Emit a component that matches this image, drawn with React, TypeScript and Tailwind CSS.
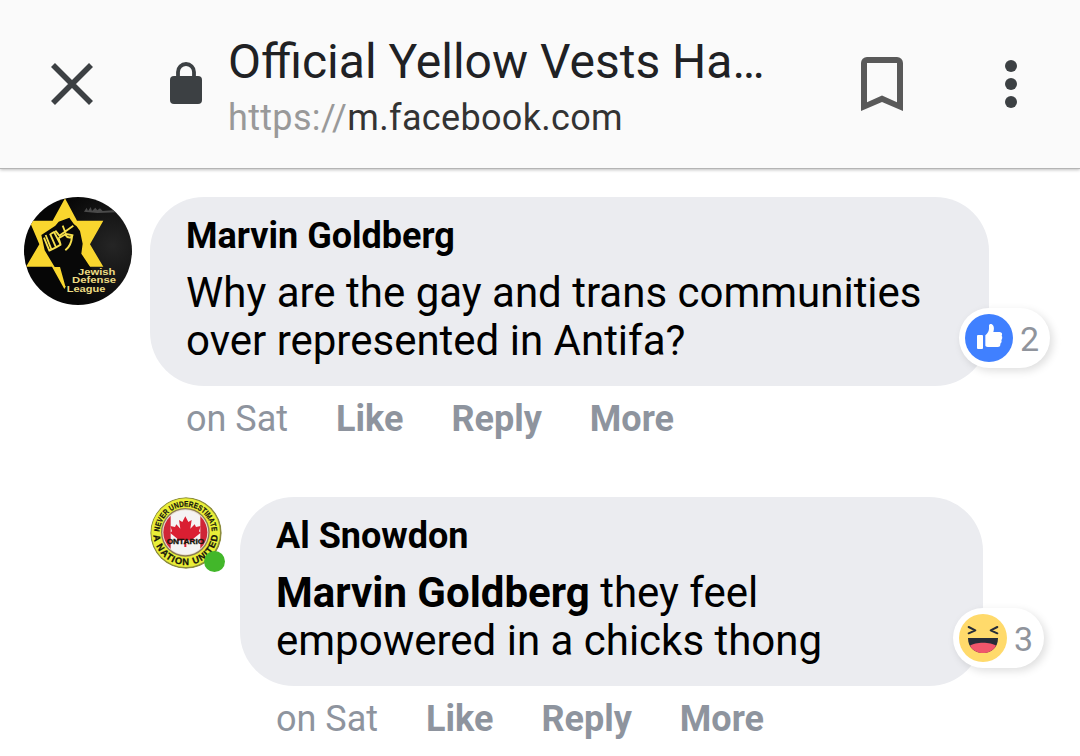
import React from 'react'
import { clsx } from 'clsx'

const CloseIcon = () => (
  <svg viewBox="0 0 42 42" className="w-[42px] h-[42px] shrink-0">
    <path d="M2 2L40 40M40 2L2 40" stroke="#3c4043" strokeWidth="5.6" fill="none" />
  </svg>
)

const LockIcon = () => (
  <svg viewBox="0 0 32 42" className="w-8 h-[42px] shrink-0">
    <path d="M8 16V10a8 8 0 0 1 16 0v6" stroke="#3c4043" strokeWidth="3.8" fill="none" />
    <rect x="0" y="14" width="32" height="28" rx="4" fill="#3c4043" />
  </svg>
)

const BookmarkIcon = () => (
  <svg viewBox="0 0 42 54" className="w-[42px] h-[54px] shrink-0">
    <path
      fillRule="evenodd"
      fill="#595959"
      d="M6 0H36A6 6 0 0 1 42 6V54L21 45L0 54V6A6 6 0 0 1 6 0ZM6 6V45.2L21 38.6L36 45.2V6Z"
    />
  </svg>
)

const MoreIcon = () => (
  <svg viewBox="0 0 12 48" className="w-3 h-12 shrink-0" fill="#3c4043">
    <circle cx="6" cy="6" r="6" />
    <circle cx="6" cy="24" r="6" />
    <circle cx="6" cy="42" r="6" />
  </svg>
)

const LeagueAvatar = () => (
  <svg viewBox="42 36 324 324" className="w-[108px] h-[108px] rounded-full">
    <defs>
      <radialGradient id="night" cx="0.82" cy="0.45" r="0.6">
        <stop offset="0" stopColor="#252525" />
        <stop offset="1" stopColor="#060606" />
      </radialGradient>
    </defs>
    <rect x="42" y="36" width="324" height="324" fill="url(#night)" />
    <path
      d="M222 80l8-12 4 10 8-12 4 12 10-10 6 8 8-6 8 8 30-2 14 6-60 2z"
      fill="#4a4a4a"
    />
    <path d="M165 40L201 107H280L240 178L280 245H202L163 312L126 245H48L88 178L58 107H128Z" fill="#f9d62e" />
    {/* raised arm */}
    <path
      d="M94 150L136 122L146 110L178 98L192 118L200 124L210 138L218 176L214 206L262 278L262 300L166 304L150 246L134 246L104 196Z"
      fill="#080808"
    />
    {/* gaps between the fingers and the thumb */}
    <path
      d="M107 150L125 195M102 158L118 197L138 187L120 146M138 187L152 179L132 141L122 147M152 179L146 160L168 147L190 151M168 147L158 122M136 137L148 152L190 122"
      fill="none"
      stroke="#f7e04c"
      strokeWidth="5.5"
      strokeLinejoin="round"
    />
    <path
      d="M166 149Q174 162 186 155Q184 182 166 196"
      fill="none"
      stroke="#f7e04c"
      strokeWidth="6"
    />
    <g
      fill="#eddc83"
      fontFamily="Liberation Sans, sans-serif"
      fontSize="27"
      fontWeight="bold"
    >
      <text x="204" y="270" textLength="112" lengthAdjust="spacingAndGlyphs">Jewish</text>
      <text x="186" y="295" textLength="132" lengthAdjust="spacingAndGlyphs">Defense</text>
      <text x="170" y="320" textLength="116" lengthAdjust="spacingAndGlyphs">League</text>
    </g>
  </svg>
)

const OntarioAvatar = () => (
  <svg viewBox="30 24 216 216" className="w-[72px] h-[72px] rounded-full">
    <defs>
      <path id="ring-top" d="M59 131A78 78 0 0 1 215 131" />
      <path id="ring-bottom" d="M40 131A97 97 0 0 0 234 131" />
      <clipPath id="flag">
        <circle cx="136" cy="130" r="66" />
      </clipPath>
    </defs>
    <circle cx="138" cy="132" r="107" fill="#8b8b3c" />
    <circle cx="137" cy="131" r="103" fill="#e9ee38" />
    <circle cx="136" cy="130" r="73" fill="#8b7a55" />
    <circle cx="136" cy="130" r="69" fill="#e9dfd2" />
    <g clipPath="url(#flag)">
      <rect x="66" y="60" width="142" height="142" fill="#f5f3f3" />
      <rect x="66" y="60" width="26" height="142" fill="#cf2637" />
      <rect x="181" y="60" width="30" height="142" fill="#cf2637" />
    </g>
    <path
      d="M136 82L145 99L155 93L151 119L164 106L168 114L182 111L177 127L182 131L160 149L162 156L139 153V174H133V153L110 156L112 149L90 131L96 127L91 111L105 114L109 106L121 119L117 93L127 99Z"
      fill="#da1f32"
    />
    <g fill="#15150b" stroke="#15150b" fontFamily="Liberation Sans, sans-serif" fontWeight="bold">
      <text x="80" y="166" fontSize="22" textLength="113" lengthAdjust="spacingAndGlyphs">
        ONTARIO
      </text>
      <text fontSize="24" strokeWidth="0.6">
        <textPath href="#ring-top" startOffset="3" textLength="238" lengthAdjust="spacingAndGlyphs">
          NEVER UNDERESTIMATE
        </textPath>
      </text>
      <text fontSize="28" strokeWidth="0.8">
        <textPath href="#ring-bottom" startOffset="8" textLength="288" lengthAdjust="spacing">
          A NATION UNITED
        </textPath>
      </text>
    </g>
  </svg>
)

const LikeReaction = () => (
  <svg viewBox="0 0 144 144" className="w-12 h-12 shrink-0">
    <circle cx="72" cy="72" r="72" fill="#4080ff" />
    <g fill="#fff">
      <rect x="36" y="63" width="18" height="42" rx="3" />
      <path d="M61 64C67 59 71 53 72 45V35C72 29 80 28 84 34C88 40 87 48 85 54H104C111 54 113 61 110 65C113 69 112 75 109 78C111 83 109 87 106 89C107 95 104 99 98 99H72C67 99 63 98 61 95Z" />
    </g>
  </svg>
)

const HahaReaction = () => (
  <svg viewBox="0 0 144 144" className="w-12 h-12 shrink-0">
    <circle cx="72" cy="72" r="72" fill="#ffda6b" />
    <path
      d="M29 39L49 49L29 58M115 39L95 49L115 58"
      fill="none"
      stroke="#262c38"
      strokeWidth="6"
      strokeLinecap="round"
      strokeLinejoin="round"
    />
    <path d="M27 72H117C117 101 97 117 72 117S27 101 27 72Z" fill="#262c38" />
    <path d="M33 95C48 83 96 83 111 95C103 110 88 117 72 117S41 110 33 95Z" fill="#f0566b" />
  </svg>
)

interface CommentProps {
  avatar: React.ReactNode
  name: string
  reaction: React.ReactNode
  count: number
  bubbleClass: string
  online?: boolean
  children: React.ReactNode
}

const Comment: React.FC<CommentProps> = ({
  avatar,
  name,
  reaction,
  count,
  bubbleClass,
  online,
  children,
}) => (
  <article className="flex items-start gap-[18px]">
    <div className="relative shrink-0">
      {avatar}
      {online && (
        <span className="absolute -right-[3px] -bottom-[3px] w-[21px] h-[21px] rounded-full bg-[#42b72a]" />
      )}
    </div>
    <div>
      <div
        className={clsx(
          'relative h-[189px] rounded-[54px] bg-[#ebecf0] pl-9 pt-[18px] text-black',
          bubbleClass
        )}
      >
        <h2 className="text-[36px] leading-[42px] font-bold">{name}</h2>
        <p className="mt-3 text-[42px] leading-[48px] whitespace-nowrap">{children}</p>
        <div className="absolute -right-[61px] bottom-[18px] flex h-[60px] w-[91px] items-center gap-[7px] rounded-full bg-white pl-[6px] text-[34px] text-[#90949c] shadow-[3px_3px_8px_rgba(0,0,0,0.13)]">
          {reaction}
          <span className="pt-[2px]">{count}</span>
        </div>
      </div>
      <div className="mt-3 flex gap-12 pl-9 text-[36px] leading-[42px] font-bold text-[#8e949e]">
        <span className="font-normal">on Sat</span>
        <button>Like</button>
        <button>Reply</button>
        <button>More</button>
      </div>
    </div>
  </article>
)

export default function App() {
  return (
    <div className="w-[1080px] h-[756px] overflow-hidden bg-white font-['Roboto',sans-serif]">
      <header className="flex h-[168px] items-center bg-[#fafafa] pl-[51px] shadow-[0_1px_0_#b4b4b4,0_2px_3px_rgba(0,0,0,0.25)]">
        <CloseIcon />
        <div className="ml-[77px] pb-[2px]">
          <LockIcon />
        </div>
        <div className="ml-[26px] w-[633px] pt-[5px] whitespace-nowrap">
          <h1 className="text-[48px] leading-[56px] text-[#202124]">Official Yellow Vests Ha…</h1>
          <div className="mt-[7px] text-[36px] leading-[42px] tracking-[0.33px] text-[#333]">
            <span className="text-[#999]">https://</span>m.facebook.com
          </div>
        </div>
        <BookmarkIcon />
        <div className="ml-[102px]">
          <MoreIcon />
        </div>
      </header>

      <main className="flex flex-col gap-[57px] pt-[29px] pl-6">
        <Comment
          avatar={<LeagueAvatar />}
          name="Marvin Goldberg"
          reaction={<LikeReaction />}
          count={2}
          bubbleClass="w-[839px]"
        >
          Why are the gay and trans communities
          <br />
          over represented in Antifa?
        </Comment>
        <div className="pl-[126px]">
          <Comment
            avatar={<OntarioAvatar />}
            name="Al Snowdon"
            reaction={<HahaReaction />}
            count={3}
            bubbleClass="w-[743px]"
            online
          >
            <b>Marvin Goldberg</b> they feel
            <br />
            empowered in a chicks thong
          </Comment>
        </div>
      </main>
    </div>
  )
}
